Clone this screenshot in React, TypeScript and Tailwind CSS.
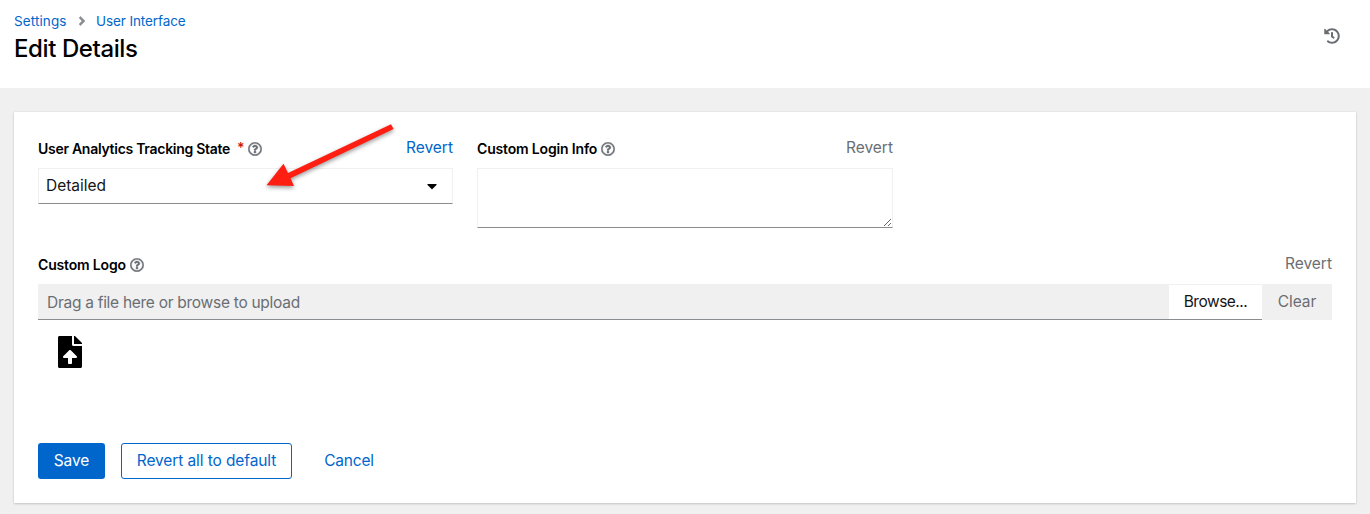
import type { ReactNode } from "react";
import {
  FaAngleRight,
  FaCaretDown,
  FaFileUpload,
  FaHistory,
  FaRegQuestionCircle,
} from "react-icons/fa";

function FieldHeader({
  children,
  required = false,
  active = false,
}: {
  children: ReactNode;
  required?: boolean;
  active?: boolean;
}) {
  return (
    <div className="flex h-8 items-start justify-between">
      <label className="flex h-6 items-center text-[14px] font-semibold text-black">
        <span className={required ? "tracking-[-0.28px]" : "tracking-[-0.17px]"}>{children}</span>
        {required && (
          <span className="ml-[7px] h-5 w-[7px] text-[14px] leading-5 text-[#c9190b]">*</span>
        )}
        <FaRegQuestionCircle className="mt-0.5 ml-1 size-3.5 stroke-[#6a6e73] stroke-[14] text-[#6a6e73]" />
      </label>
      <button
        className={
          active
            ? "h-6 text-[15.5px] leading-[22px] text-[#0066cc]"
            : "h-6 text-[15.5px] leading-[22px] text-[#6a6e73]"
        }
      >
        Revert
      </button>
    </div>
  );
}

function PointerArrow() {
  return (
    <svg
      className="pointer-events-none absolute top-[120px] left-[260px] drop-shadow-[0_2px_2px_rgba(0,0,0,0.4)]"
      width="140"
      height="75"
      viewBox="0 0 140 75"
      aria-hidden="true"
    >
      <path d="M131 4.3 L133.6 9 L30.5 58.3 L34 66 L6.5 65.3 L23.5 43.8 L28 53 Z" fill="#ff1e12" />
    </svg>
  );
}

export default function App() {
  return (
    <div className="relative flex h-[514px] w-full flex-col overflow-hidden bg-[#f0f0f0] font-['Inter',sans-serif] text-[#151515]">
      <header className="flex h-[88px] shrink-0 justify-between bg-white pl-3.5 pr-[30px]">
        <div className="pt-[11px]">
          <nav className="flex h-5 items-center text-[13.5px] text-[#0066cc]">
            <a className="w-[53px] tracking-[0.1px]">Settings</a>
            <FaAngleRight className="mr-[7px] ml-2 size-3.5 stroke-[#8a8d90] stroke-[16] text-[#8a8d90]" />
            <a className="tracking-[-0.1px]">User Interface</a>
          </nav>
          <h1 className="mt-[2px] text-[24px] leading-8 font-medium tracking-[-0.4px] text-black">
            Edit Details
          </h1>
        </div>
        <button aria-label="History" className="mt-7 h-4 text-[#6a6e73]">
          <FaHistory className="size-4" />
        </button>
      </header>

      <main className="px-3.5 pt-6">
        <form className="flex h-[391px] flex-col bg-white px-6 pt-6 shadow-[0_1px_2px_rgba(3,3,3,0.16),0_0_2px_rgba(3,3,3,0.08)]">
          <div className="grid h-[116px] grid-cols-[415px_416px] gap-x-6">
            <div>
              <FieldHeader required active>User Analytics Tracking State</FieldHeader>
              <div className="flex h-9 items-center justify-between border border-[#f0f0f0] border-b-[#8a8d90] pr-3 pl-[7px] text-[15.5px]">
                <span>Detailed</span>
                <FaCaretDown className="size-4 text-black" />
              </div>
            </div>
            <div>
              <FieldHeader>Custom Login Info</FieldHeader>
              <textarea className="block h-[60px] w-full resize border border-[#f0f0f0] border-b-[#8a8d90] bg-white" />
            </div>
          </div>

          <FieldHeader>Custom Logo</FieldHeader>
          <div className="flex h-9 shrink-0 text-[15.5px]">
            <div className="flex flex-1 items-center border-b border-[#8a8d90] bg-[#f0f0f0] pt-0.5 pl-[9px] tracking-[-0.28px] text-[#6a6e73]">
              Drag a file here or browse to upload
            </div>
            <button className="w-[93px] border-t border-b border-t-[#f0f0f0] border-b-[#8a8d90] bg-white tracking-[-0.5px]">
              Browse...
            </button>
            <button className="w-[70px] bg-[#f0f0f0] tracking-[-0.1px] text-[#6a6e73]">Clear</button>
          </div>
          <FaFileUpload className="mt-4 ml-4 size-8 shrink-0 text-black" />

          <div className="mt-[75px] flex h-9 shrink-0 gap-4 text-[15.5px]">
            <button type="button" className="w-[67px] rounded-[3px] bg-[#0066cc] tracking-[-0.1px] text-white">Save</button>
            <button type="button" className="w-[171px] rounded-[3px] border border-[#0066cc] tracking-[-0.1px] text-[#0066cc]">
              Revert all to default
            </button>
            <button type="button" className="w-[82px] tracking-[-0.2px] text-[#0066cc]">Cancel</button>
          </div>
        </form>
      </main>
      <PointerArrow />
    </div>
  );
}
